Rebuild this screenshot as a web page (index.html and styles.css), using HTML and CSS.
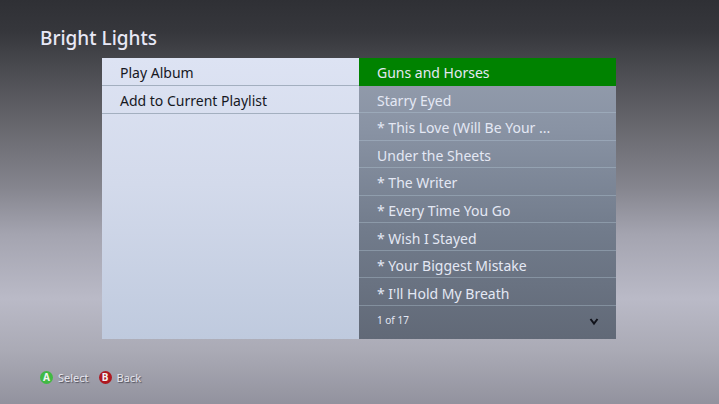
FILE: index.html
```
<!DOCTYPE html>
<html lang="en">
<head>
    <meta charset="UTF-8">
    <meta name="viewport" content="width=device-width, initial-scale=1.0">
    <title>Bright Lights</title>
    <link rel="stylesheet" href="styles.css">
</head>
<body>
    <h1>Bright Lights</h1>

    <main class="panel">
        <div class="actions">
            <button class="item" type="button">Play Album</button>
            <button class="item" type="button">Add to Current Playlist</button>
        </div>

        <div class="tracks">
            <div class="track-list">
                <button class="item selected" type="button">Guns and Horses</button>
                <button class="item" type="button">Starry Eyed</button>
                <button class="item" type="button">* This Love (Will Be Your ...</button>
                <button class="item" type="button">Under the Sheets</button>
                <button class="item" type="button">* The Writer</button>
                <button class="item" type="button">* Every Time You Go</button>
                <button class="item" type="button">* Wish I Stayed</button>
                <button class="item" type="button">* Your Biggest Mistake</button>
                <button class="item" type="button">* I'll Hold My Breath</button>
            </div>
            <div class="position">
                <span>1 of 17</span>
                <svg class="arrow" viewBox="0 0 10 8" aria-hidden="true">
                    <path d="M1.5 1 L5 5.5 L8.5 1"/>
                </svg>
            </div>
        </div>
    </main>

    <footer>
        <button class="hint" type="button"><span class="key key-a">A</span>Select</button>
        <button class="hint" type="button"><span class="key key-b">B</span>Back</button>
    </footer>
</body>
</html>
```

FILE: styles.css
```
* {
    box-sizing: border-box;
}
body {
    margin: 0;
    min-height: 100vh;
    padding: 26px 40px 0;
    font-family: "Noto Sans", "Open Sans", sans-serif;
    font-size: 14px;
    background: linear-gradient(#2f3035 0%, #36373c 8%, #48494e 16%, #65656b 30%, #84848d 46%, #a4a4b0 58%, #babac7 74%, #aaaab5 87%, #92929e 100%);
}
h1 {
    margin: 0;
    font-size: 19px;
    font-weight: 500;
    line-height: 24px;
    color: #e8e8f6;
}
button {
    border: none;
    padding: 0;
    background: none;
    font: inherit;
    color: inherit;
    text-align: left;
    cursor: pointer;
}

/* Two columns: album actions and the track list */
.panel {
    display: grid;
    grid-template-columns: 1fr 1fr;
    margin: 8px 63px 0 62px;
}
.actions {
    display: grid;
    grid-auto-rows: 28px;
    background: linear-gradient(#dde3f3, #d3daeb 45%, #bfcade);
    color: #16181f;
}
.tracks {
    background: linear-gradient(#959eae, #8993a4 25%, #717b8b 62%, #616977);
    color: #e4e8f4;
}
.track-list {
    display: grid;
    grid-auto-rows: 1fr;
    min-height: 248px;
}
.item {
    padding: 4px 18px 0;
    border-bottom: 1px solid rgba(185, 205, 222, 0.35);
    line-height: 20px;
}
.actions .item {
    padding-top: 2px;
    border-color: #a3afbf;
}
.item.selected {
    background: #008200;
    border-color: #008200;
}
.position {
    display: flex;
    align-items: center;
    justify-content: space-between;
    height: 33px;
    padding: 0 17px 6px 18px;
    font-size: 10px;
}
.arrow {
    width: 10px;
    height: 8px;
    margin-top: 4px;
    fill: none;
    stroke: #11131b;
    stroke-width: 2;
}

/* Controller button hints */
footer {
    display: flex;
    gap: 10px;
    margin-top: 31px;
    font-size: 11px;
    color: #e6e6ee;
}
.hint {
    display: flex;
    align-items: center;
    gap: 5px;
    text-shadow: 1px 1px 1px #4c4c58;
}
.key {
    width: 13px;
    height: 13px;
    border-radius: 50%;
    font-size: 10px;
    font-weight: bold;
    line-height: 13px;
    text-align: center;
    text-shadow: none;
    color: #f4f4f4;
}
.key-a {
    background: #41b944;
}
.key-b {
    background: #ae1820;
}
```
